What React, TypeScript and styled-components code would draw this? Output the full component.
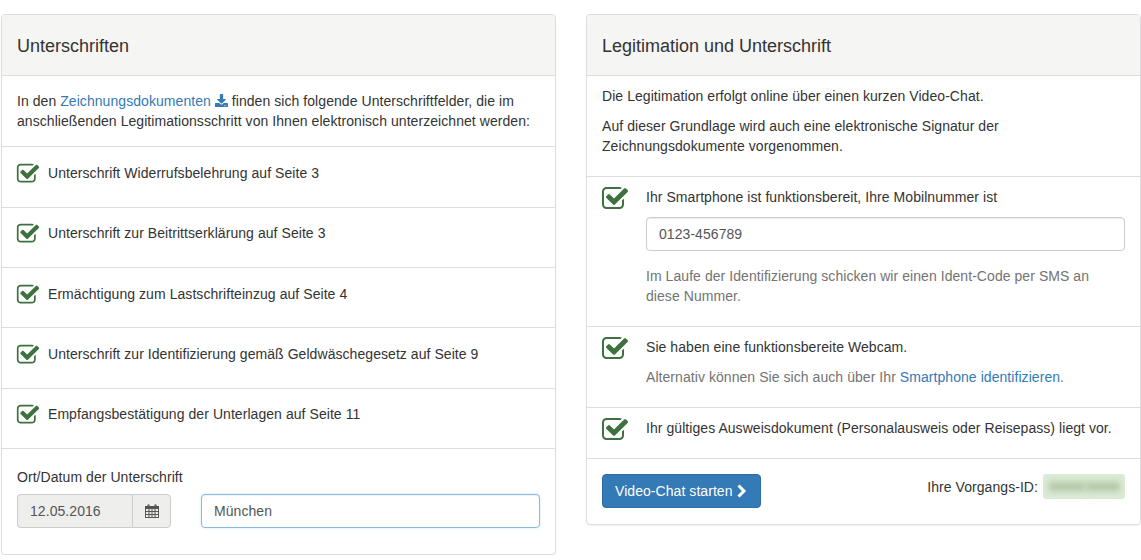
import React from 'react'
import styled, { createGlobalStyle } from 'styled-components'
import { FaDownload } from 'react-icons/fa'

const Global = createGlobalStyle`
  html, body {
    margin: 0;
    padding: 0;
    background: #fff;
    overflow: hidden;
  }
  * { box-sizing: border-box; }
  body {
    font-family: "Liberation Sans", Arial, sans-serif;
    font-size: 14px;
    line-height: 20px;
    letter-spacing: 0.06px;
    color: #333;
  }
`

const Page = styled.div`
  display: grid;
  grid-template-columns: 555px 555px;
  column-gap: 30px;
  align-items: start;
  padding: 14px 0 0 1px;
`

const Panel = styled.section`
  border: 1px solid #ddd;
  border-radius: 4px;
  background: #fff;
  box-shadow: 0 1px 1px rgba(0, 0, 0, 0.05);
`

const PanelTitle = styled.h3`
  margin: 0;
  padding: 20px 15px 20px;
  height: 61px;
  background: #f5f5f4;
  border-bottom: 1px solid #ddd;
  border-radius: 3px 3px 0 0;
  font-size: 18px;
  font-weight: 400;
  line-height: 22px;
  letter-spacing: 0;
  color: #333;
`

const Row = styled.div<{ $h: number; $pt: number }>`
  padding: ${p => p.$pt}px 15px 0;
  border-bottom: 1px solid #ddd;
  height: ${p => p.$h}px;
`

const Text = styled.p`
  margin: 0 0 10px;
  &:last-child { margin-bottom: 0; }
`

const Link = styled.a`
  color: #337ab7;
  text-decoration: none;
`

const DownloadIcon = styled(FaDownload)`
  color: #337ab7;
  font-size: 13px;
  vertical-align: -1px;
`

const CheckRow = styled.div<{ $h: number; $pt: number }>`
  display: flex;
  align-items: flex-start;
  gap: 8px;
  height: ${p => p.$h}px;
  padding: ${p => p.$pt}px 15px 0;
  border-bottom: 1px solid #ddd;
`

const WideCheckRow = styled(CheckRow)`
  gap: 17px;
`

const CheckSvg = styled.svg<{ $size: number; $up: number }>`
  flex: none;
  width: ${p => p.$size}px;
  height: ${p => p.$size}px;
  margin: ${p => -p.$up}px 0 0 -1px;
  fill: #3d7140;
`

const CheckIcon = ({ size = 24, up = 1 }: { size?: number; up?: number }) => (
  <CheckSvg $size={size} $up={up} viewBox="0 0 1792 1792">
    <path d="M1472 930v318q0 119-84.5 203.5t-203.5 84.5h-832q-119 0-203.5-84.5t-84.5-203.5v-832q0-119 84.5-203.5t203.5-84.5h832q63 0 117 25 15 7 18 23 3 17-9 29l-49 49q-14 14-32 8-23-6-45-6h-832q-66 0-113 47t-47 113v832q0 66 47 113t113 47h832q66 0 113-47t47-113v-254q0-13 9-22l64-64q10-10 23-10 6 0 12 3 20 8 20 29zm231-489l-814 814q-24 24-57 24t-57-24l-430-430q-24-24-24-57t24-57l110-110q24-24 57-24t57 24l263 263 647-647q24-24 57-24t57 24l110 110q24 24 24 57t-24 57z" />
  </CheckSvg>
)

const CheckBody = styled.div`
  flex: 1;
  min-width: 0;
`

const Footer = styled.div`
  padding: 18px 15px 0;
  height: 105px;
`

const FieldRow = styled.div`
  display: flex;
  align-items: flex-start;
  gap: 30px;
  margin-top: 7px;
`

const DateGroup = styled.div`
  display: flex;
  width: 154px;
  height: 34px;
  flex: none;
`

const DateValue = styled.div`
  flex: 1;
  padding: 6px 12px;
  background: #eeeeec;
  border: 1px solid #ccc;
  border-right: 0;
  border-radius: 4px 0 0 4px;
  color: #555;
`

const DateAddon = styled.div`
  width: 39px;
  display: flex;
  align-items: center;
  justify-content: center;
  background: #eeeeec;
  border: 1px solid #ccc;
  border-radius: 0 4px 4px 0;
  color: #555;
`

const Input = styled.div<{ $focus?: boolean; $mt?: number }>`
  height: 34px;
  padding: 6px 12px;
  border: 1px solid ${p => (p.$focus ? '#8db9dc' : '#ccc')};
  border-radius: 4px;
  background: #fff;
  color: #555;
  margin-top: ${p => p.$mt ?? 0}px;
  box-shadow: ${p =>
    p.$focus
      ? 'inset 0 1px 1px rgba(0,0,0,.05), 0 0 3px rgba(102,175,233,.3)'
      : 'inset 0 1px 1px rgba(0,0,0,.075)'};
`

const CityInput = styled(Input)`
  flex: 1;
`

const Help = styled.p<{ $mt: number }>`
  margin: ${p => p.$mt}px 0 0;
  max-width: 450px;
  color: #737373;
`

const ActionBar = styled.div`
  display: flex;
  justify-content: space-between;
  align-items: flex-start;
  height: 65px;
  padding: 15px 15px 0;
`

const Button = styled.button`
  width: 159px;
  height: 34px;
  padding: 6px 12px;
  border: 1px solid #2e6da4;
  border-radius: 4px;
  background: #337ab7;
  color: #fff;
  font: inherit;
  letter-spacing: inherit;
  display: flex;
  align-items: center;
  gap: 3px;
  white-space: nowrap;
`

const Process = styled.div`
  display: flex;
  align-items: flex-start;
  gap: 5px;
`

const ProcessLabel = styled.span`
  padding-top: 3px;
`

const BlurBox = styled.div`
  width: 82px;
  height: 25px;
  border-radius: 3px;
  background: #dcebd4;
  filter: blur(0.6px);
  display: flex;
  align-items: center;
  justify-content: center;
  gap: 1px;
`

const BlurredWord = styled.div<{ $w: number }>`
  width: ${p => p.$w}px;
  height: 9px;
  background: #b2c6a7;
  filter: blur(3px);
`

const CalendarIcon = () => (
  <svg width="14" height="14" viewBox="0 0 14 14" fill="#555">
    <path d="M0 2h2.500V0.500h2V2h5V0.500h2V2H14V14H0z" />
    <path
      fill="#eeeeec"
      d="M1 5h2.500v2H1zM4.500 5h2v2h-2zM7.500 5h2v2h-2zM10.500 5H13v2h-2.500zM1 8h2.500v2H1zM4.500 8h2v2h-2zM7.500 8h2v2h-2zM10.500 8H13v2h-2.500zM1 11h2.500v2H1zM4.500 11h2v2h-2zM7.500 11h2v2h-2zM10.500 11H13v2h-2.500z"
    />
  </svg>
)

const ChevronIcon = () => (
  <svg width="11" height="14" viewBox="0 0 11 14" fill="none" stroke="#fff" strokeWidth="3">
    <path d="M2.500 1.500 8 7l-5.500 5.500" />
  </svg>
)

const signatures: [string, number, number][] = [
  ['Unterschrift Widerrufsbelehrung auf Seite 3', 61, 16],
  ['Unterschrift zur Beitrittserklärung auf Seite 3', 60, 15],
  ['Ermächtigung zum Lastschrifteinzug auf Seite 4', 60, 16],
  ['Unterschrift zur Identifizierung gemäß Geldwäschegesetz auf Seite 9', 61, 16],
  ['Empfangsbestätigung der Unterlagen auf Seite 11', 60, 15],
]

export default function App() {
  return (
    <Page>
      <Global />
      <Panel>
        <PanelTitle>Unterschriften</PanelTitle>
        <Row $h={71} $pt={15}>
          <Text>
            In den <Link href="#">Zeichnungsdokumenten</Link> <DownloadIcon /> finden sich folgende
            Unterschriftfelder, die im anschließenden Legitimationsschritt von Ihnen elektronisch
            unterzeichnet werden:
          </Text>
        </Row>
        {signatures.map(([label, h, pt]) => (
          <CheckRow key={label} $h={h} $pt={pt}>
            <CheckIcon />
            <CheckBody>{label}</CheckBody>
          </CheckRow>
        ))}
        <Footer>
          <div>Ort/Datum der Unterschrift</div>
          <FieldRow>
            <DateGroup>
              <DateValue>12.05.2016</DateValue>
              <DateAddon>
                <CalendarIcon />
              </DateAddon>
            </DateGroup>
            <CityInput $focus>München</CityInput>
          </FieldRow>
        </Footer>
      </Panel>
      <Panel>
        <PanelTitle>Legitimation und Unterschrift</PanelTitle>
        <Row $h={101} $pt={10}>
          <Text>Die Legitimation erfolgt online über einen kurzen Video-Chat.</Text>
          <Text>
            Auf dieser Grundlage wird auch eine elektronische Signatur der Zeichnungsdokumente
            vorgenommen.
          </Text>
        </Row>
        <WideCheckRow $h={150} $pt={10}>
          <CheckIcon size={28} up={2} />
          <CheckBody>
            Ihr Smartphone ist funktionsbereit, Ihre Mobilnummer ist
            <Input $mt={10}>0123-456789</Input>
            <Help $mt={15}>
              Im Laufe der Identifizierung schicken wir einen Ident-Code per SMS an diese Nummer.
            </Help>
          </CheckBody>
        </WideCheckRow>
        <WideCheckRow $h={81} $pt={10}>
          <CheckIcon size={28} up={2} />
          <CheckBody>
            Sie haben eine funktionsbereite Webcam.
            <Help $mt={10}>
              Alternativ können Sie sich auch über Ihr <Link href="#">Smartphone identifizieren</Link>.
            </Help>
          </CheckBody>
        </WideCheckRow>
        <WideCheckRow $h={51} $pt={10}>
          <CheckIcon size={28} up={2} />
          <CheckBody>Ihr gültiges Ausweisdokument (Personalausweis oder Reisepass) liegt vor.</CheckBody>
        </WideCheckRow>
        <ActionBar>
          <Button>
            Video-Chat starten <ChevronIcon />
          </Button>
          <Process>
            <ProcessLabel>Ihre Vorgangs-ID:</ProcessLabel>
            <BlurBox>
              <BlurredWord $w={36} />
              <BlurredWord $w={34} />
            </BlurBox>
          </Process>
        </ActionBar>
      </Panel>
    </Page>
  )
}
